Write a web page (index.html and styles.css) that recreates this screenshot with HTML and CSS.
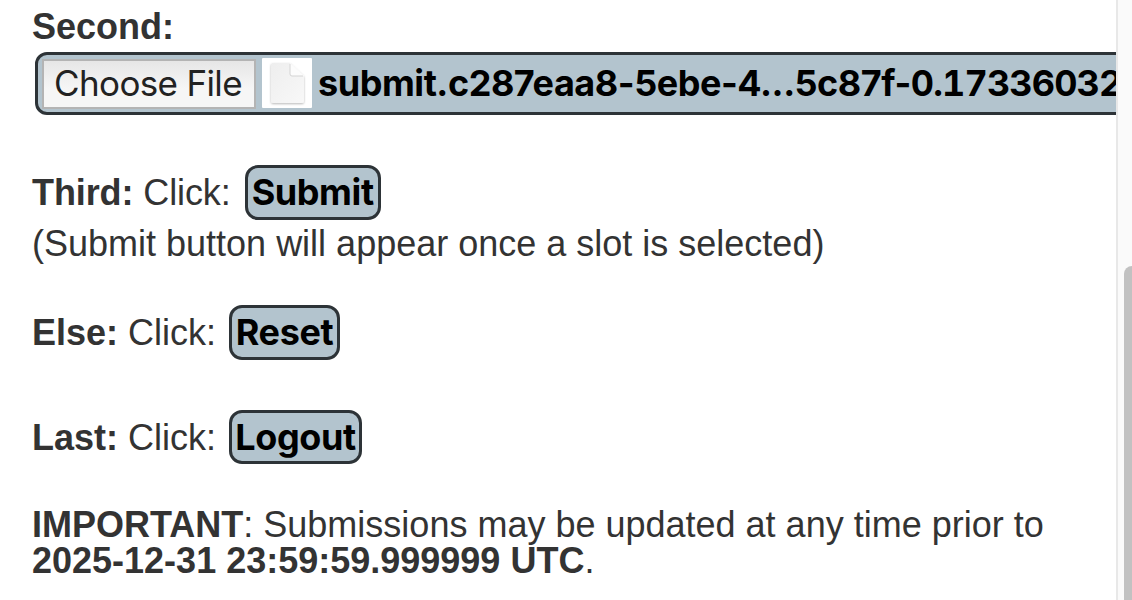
FILE: index.html
```html
<!DOCTYPE html>
<html lang="en">
<head>
<meta charset="utf-8">
<title>Submissions</title>
<link rel="stylesheet" href="styles.css">
</head>
<body>
<div class="page">
<main class="content">
<div class="label"><b>Second:</b></div>
<div class="file"><span class="choose">Choose File</span><span class="thumb"><svg width="50" height="50" viewBox="0 0 50 50"><defs><linearGradient id="p" x1="0" y1="0" x2="1" y2="1"><stop offset="0" stop-color="#eeeeee"/><stop offset="1" stop-color="#f8f8f8"/></linearGradient><filter id="s" x="-20%" y="-20%" width="140%" height="140%"><feDropShadow dx="0" dy="1" stdDeviation="1" flood-color="#000" flood-opacity=".28"/></filter></defs><path d="M11 5H28L42 18V43Q42 45 40 45H11Q9 45 9 43V7Q9 5 11 5Z" fill="url(#p)" filter="url(#s)"/><path d="M28 5L42 18H30Q28 18 28 16Z" fill="#fcfcfc"/><path d="M28 6V16Q28 18 30 18H41" fill="none" stroke="#d4d4d4" stroke-width="1"/></svg></span><span class="filename">submit.c287eaa8-5ebe-4...5c87f-<span class="digits">0.17336032</span></span></div>
<div class="row third"><span class="text"><b>Third:</b> Click:</span><button class="btn submit">Submit</button></div>
<div class="note">(Submit button will appear once a slot is selected)</div>
<div class="row else"><span class="text"><b>Else:</b> Click:</span><button class="btn reset">Reset</button></div>
<div class="row last"><span class="text"><b>Last:</b> Click:</span><button class="btn logout">Logout</button></div>
<p class="important"><b>IMPORTANT</b>: Submissions may be updated at any time prior to<br><b>2025-12-31 23:59:59.999999 UTC</b>.</p>
</main>
<div class="track"><div class="thumbbar"></div></div>
</div>
</body>
</html>
```
FILE: styles.css
```css
* { box-sizing: border-box; }
body { margin: 0; overflow: hidden; background: #fff; color: #333; font: 36px/36px "Liberation Sans", Arial, sans-serif; }
.page { display: flex; width: 1132px; height: 600px; overflow: hidden; }
.content { width: 1116px; padding: 9px 0 0 32px; overflow: hidden; flex: none; white-space: nowrap; }
.label { height: 43px; }
.file { display: flex; align-items: center; width: 1140px; height: 63px; margin-left: 3px; padding-left: 4px; border: 3px solid #2d3337; border-radius: 12px; background: #b3c4ce; color: #000; }
.choose { width: 214px; height: 50px; padding-right: 2px; border: 2px solid #b4b4b4; background: linear-gradient(#e6e6e6, #f6f6f6 60%); color: #222; font: 35px/44px Inter, sans-serif; letter-spacing: -0.65px; text-align: center; }
.thumb { width: 50px; height: 50px; margin: -1px 0 0 6px; border-radius: 1px; background: #fff; }
.thumb svg { display: block; }
.filename { margin: -2px 0 0 6px; font: bold 36px/50px Inter, sans-serif; letter-spacing: -0.45px; }
.digits { letter-spacing: -0.85px; font-variant-numeric: tabular-nums; }
.row { display: flex; align-items: center; height: 55px; }
.btn { display: flex; justify-content: center; height: 55px; padding: 1px 0 0; border: 3px solid #2d3337; border-radius: 13px; background: #b3c4ce; color: #000; font: bold 36px/46px Inter, sans-serif; letter-spacing: -0.4px; white-space: nowrap; }
.third { margin-top: 50px; }
.third .text { letter-spacing: -0.1px; }
.submit { width: 136px; margin-left: 14px; }
.note { margin-top: 6px; }
.else { margin-top: 43px; }
.reset { width: 111px; margin-left: 13px; }
.last { margin-top: 50px; }
.logout { width: 133px; height: 54px; margin: 0 0 1px 13px; line-height: 47px; }
.important { margin: 42px 0 0; }
.track { width: 16px; background: #fafafa; border-left: 2px solid #e8e8e8; padding-top: 266px; }
.thumbbar { height: 400px; margin-left: 6px; width: 16px; border-radius: 8px; background: #c1c1c1; }
```
